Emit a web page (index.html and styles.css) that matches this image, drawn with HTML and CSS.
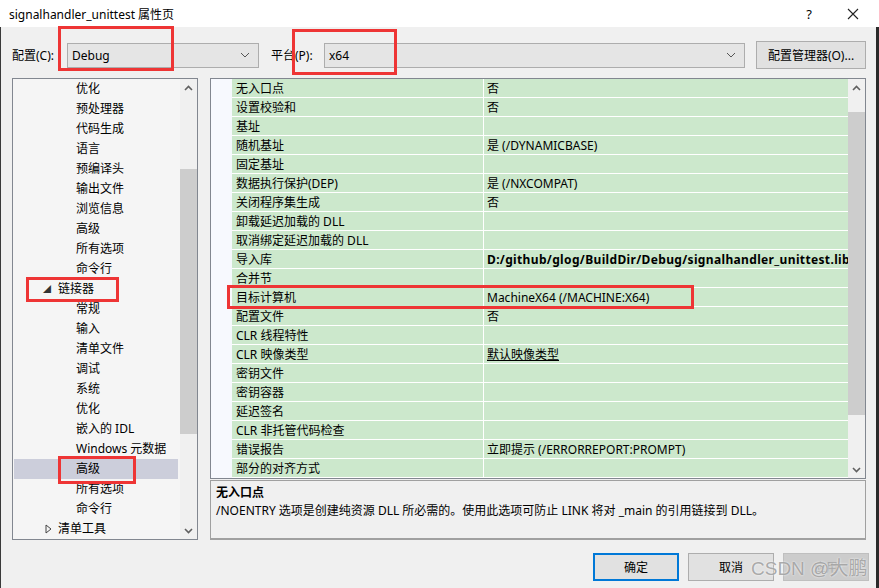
FILE: index.html
```html
<!DOCTYPE html>
<html lang="zh-CN">

<head>
    <meta charset="UTF-8">
    <title>signalhandler_unittest 属性页</title>
    <link rel="stylesheet" href="styles.css">
</head>

<body>
    <div class="window">
        <!-- Title bar -->
        <div class="titlebar">
            <span class="title">signalhandler_unittest 属性页</span>
            <span class="help">?</span>
            <svg class="close" width="12" height="12" viewBox="0 0 12 12">
                <path d="M1 1 L11 11 M11 1 L1 11" stroke="#222" stroke-width="1.1" fill="none" />
            </svg>
        </div>

        <div class="dialog">
            <!-- Config row -->
            <div class="config-row">
                <span class="label label-config">配置(C):</span>
                <div class="combo combo-config">
                    <span>Debug</span>
                    <svg class="chev" width="10" height="6" viewBox="0 0 10 6"><path d="M1 1 L5 5 L9 1" stroke="#555" fill="none" /></svg>
                </div>
                <span class="label label-platform">平台(P):</span>
                <div class="combo combo-platform">
                    <span>x64</span>
                    <svg class="chev" width="10" height="6" viewBox="0 0 10 6"><path d="M1 1 L5 5 L9 1" stroke="#555" fill="none" /></svg>
                </div>
                <div class="btn btn-manager">配置管理器(O)...</div>
            </div>

            <div class="main">
                <!-- Tree -->
                <div class="tree">
                    <div class="tree-list">
                        <div class="node lv2">优化</div>
                        <div class="node lv2">预处理器</div>
                        <div class="node lv2">代码生成</div>
                        <div class="node lv2">语言</div>
                        <div class="node lv2">预编译头</div>
                        <div class="node lv2">输出文件</div>
                        <div class="node lv2">浏览信息</div>
                        <div class="node lv2">高级</div>
                        <div class="node lv2">所有选项</div>
                        <div class="node lv2">命令行</div>
                        <div class="node lv1"><span class="tri open">◢</span>链接器</div>
                        <div class="node lv2">常规</div>
                        <div class="node lv2">输入</div>
                        <div class="node lv2">清单文件</div>
                        <div class="node lv2">调试</div>
                        <div class="node lv2">系统</div>
                        <div class="node lv2">优化</div>
                        <div class="node lv2">嵌入的 IDL</div>
                        <div class="node lv2">Windows 元数据</div>
                        <div class="node lv2 selected">高级</div>
                        <div class="node lv2">所有选项</div>
                        <div class="node lv2">命令行</div>
                        <div class="node lv1"><span class="tri closed">
                            <svg width="7" height="10" viewBox="0 0 7 10"><path d="M1 1 L6 5 L1 9 Z" stroke="#444" fill="none" /></svg>
                        </span>清单工具</div>
                    </div>
                    <div class="scrollbar tree-scroll">
                        <svg class="arrow" width="9" height="6" viewBox="0 0 9 6"><path d="M1 5 L4.5 1.5 L8 5" stroke="#606060" stroke-width="1.6" fill="none" /></svg>
                        <div class="thumb"></div>
                        <svg class="arrow down" width="9" height="6" viewBox="0 0 9 6"><path d="M1 1 L4.5 4.5 L8 1" stroke="#606060" stroke-width="1.6" fill="none" /></svg>
                    </div>
                </div>

                <div class="right">
                    <!-- Property grid -->
                    <div class="grid">
                        <div class="rows">
                            <div class="row"><div class="strip"></div><div class="name">无入口点</div><div class="value">否</div></div>
                            <div class="row"><div class="strip"></div><div class="name">设置校验和</div><div class="value">否</div></div>
                            <div class="row"><div class="strip"></div><div class="name">基址</div><div class="value"></div></div>
                            <div class="row"><div class="strip"></div><div class="name">随机基址</div><div class="value">是 (/DYNAMICBASE)</div></div>
                            <div class="row"><div class="strip"></div><div class="name">固定基址</div><div class="value"></div></div>
                            <div class="row"><div class="strip"></div><div class="name">数据执行保护(DEP)</div><div class="value">是 (/NXCOMPAT)</div></div>
                            <div class="row"><div class="strip"></div><div class="name">关闭程序集生成</div><div class="value">否</div></div>
                            <div class="row"><div class="strip"></div><div class="name">卸载延迟加载的 DLL</div><div class="value"></div></div>
                            <div class="row"><div class="strip"></div><div class="name">取消绑定延迟加载的 DLL</div><div class="value"></div></div>
                            <div class="row"><div class="strip"></div><div class="name">导入库</div><div class="value bold">D:/github/glog/BuildDir/Debug/signalhandler_unittest.lib</div></div>
                            <div class="row"><div class="strip"></div><div class="name">合并节</div><div class="value"></div></div>
                            <div class="row"><div class="strip"></div><div class="name">目标计算机</div><div class="value">MachineX64 (/MACHINE:X64)</div></div>
                            <div class="row"><div class="strip"></div><div class="name">配置文件</div><div class="value">否</div></div>
                            <div class="row"><div class="strip"></div><div class="name">CLR 线程特性</div><div class="value"></div></div>
                            <div class="row"><div class="strip"></div><div class="name">CLR 映像类型</div><div class="value"><u>默认映像类型</u></div></div>
                            <div class="row"><div class="strip"></div><div class="name">密钥文件</div><div class="value"></div></div>
                            <div class="row"><div class="strip"></div><div class="name">密钥容器</div><div class="value"></div></div>
                            <div class="row"><div class="strip"></div><div class="name">延迟签名</div><div class="value"></div></div>
                            <div class="row"><div class="strip"></div><div class="name">CLR 非托管代码检查</div><div class="value"></div></div>
                            <div class="row"><div class="strip"></div><div class="name">错误报告</div><div class="value">立即提示 (/ERRORREPORT:PROMPT)</div></div>
                            <div class="row"><div class="strip"></div><div class="name">部分的对齐方式</div><div class="value"></div></div>
                        </div>
                        <div class="scrollbar grid-scroll">
                            <svg class="arrow" width="9" height="6" viewBox="0 0 9 6"><path d="M1 5 L4.5 1.5 L8 5" stroke="#606060" stroke-width="1.6" fill="none" /></svg>
                            <div class="thumb"></div>
                            <svg class="arrow down" width="9" height="6" viewBox="0 0 9 6"><path d="M1 1 L4.5 4.5 L8 1" stroke="#606060" stroke-width="1.6" fill="none" /></svg>
                        </div>
                    </div>

                    <!-- Description -->
                    <div class="desc">
                        <div class="desc-title">无入口点</div>
                        <div class="desc-text">/NOENTRY 选项是创建纯资源 DLL 所必需的。使用此选项可防止 LINK 将对 _main 的引用链接到 DLL。</div>
                    </div>
                </div>
            </div>

            <!-- Buttons -->
            <div class="footer">
                <div class="btn btn-ok">确定</div>
                <div class="btn">取消</div>
                <div class="btn btn-disabled">应用</div>
            </div>
        </div>

        <!-- Annotation boxes -->
        <div class="mark mark-config"></div>
        <div class="mark mark-platform"></div>
        <div class="mark mark-linker"></div>
        <div class="mark mark-adv"></div>
        <div class="mark mark-target"></div>

        <div class="watermark">CSDN @大鹏</div>
    </div>
</body>

</html>
```

FILE: styles.css
```css
/* General */
* {
    margin: 0;
    padding: 0;
    box-sizing: border-box;
}

body {
    font-family: "Noto Sans", "Noto Sans CJK SC", sans-serif;
    font-size: 12px;
    color: #000;
    background-color: #f0f0f0;
    overflow: hidden;
}

.window {
    position: relative;
    width: 879px;
    height: 588px;
    background-color: #f0f0f0;
}

/* Title bar */
.titlebar {
    height: 27px;
    background-color: #fff;
    display: flex;
    align-items: center;
    padding-left: 9px;
}

.title {
    font-size: 12px;
    flex: 1;
}

.help {
    font-size: 13px;
    margin-right: 35px;
}

.close {
    margin-right: 20px;
}

/* Dialog body */
.dialog {
    height: 561px;
    border-left: 1px solid #3a3a3a;
    border-right: 3px solid #2a2a2a;
    padding: 14px 10px 0 11px;
}

.config-row {
    display: flex;
    align-items: center;
    height: 28px;
}

.label-config {
    width: 55px;
}

.label-platform {
    width: 53px;
    margin-left: 12px;
}

.combo {
    height: 25px;
    background-color: #e5e5e5;
    border: 1px solid #adadad;
    display: flex;
    align-items: center;
    justify-content: space-between;
    padding: 0 8px 0 4px;
}

.combo-config {
    width: 192px;
}

.combo-platform {
    width: 421px;
}

.btn {
    height: 28px;
    width: 86px;
    background-color: #e1e1e1;
    border: 1px solid #adadad;
    display: flex;
    align-items: center;
    justify-content: center;
}

.btn-manager {
    width: 110px;
    margin-left: 11px;
}

/* Main area */
.main {
    display: flex;
    gap: 12px;
    margin-top: 9px;
    height: 462px;
}

/* Tree */
.tree {
    width: 187px;
    height: 462px;
    border: 1px solid #828790;
    background-color: #f5f5f5;
    display: flex;
}

.tree-list {
    flex: 1;
    overflow: hidden;
}

.node {
    height: 20px;
    line-height: 20px;
    white-space: nowrap;
    margin: 0 2px 0 1px;
    display: flex;
    align-items: center;
}

.lv2 {
    padding-left: 62px;
}

.lv1 {
    padding-left: 29px;
}

.tri {
    width: 15px;
    font-size: 8px;
    color: #333;
    display: flex;
    align-items: center;
}

.tri.closed {
    padding-left: 2px;
}

.selected {
    background-color: #cccedb;
}

/* Scrollbars */
.scrollbar {
    width: 17px;
    background-color: #f0f0f0;
    display: flex;
    flex-direction: column;
    align-items: center;
}

.scrollbar .arrow {
    margin: 6px 0;
    flex-shrink: 0;
}

.scrollbar .arrow.down {
    margin-top: auto;
    margin-bottom: 5px;
}

.thumb {
    width: 17px;
    background-color: #cdcdcd;
}

.tree-scroll .thumb {
    margin-top: 72px;
    height: 265px;
}

.grid-scroll .thumb {
    margin-top: 15px;
    height: 303px;
}

/* Right side */
.right {
    width: 656px;
    display: flex;
    flex-direction: column;
    gap: 1px;
}

.grid {
    height: 401px;
    border: 1px solid #828790;
    background-color: #f7f9fe;
    display: flex;
}

.rows {
    flex: 1;
    overflow: hidden;
}

.row {
    display: flex;
    height: 19px;
}

.strip {
    width: 21px;
    background-color: #f7f9fe;
}

.name,
.value {
    background-color: #cce8cc;
    border-bottom: 1px solid #fff;
    height: 19px;
    line-height: 20px;
    white-space: nowrap;
    overflow: hidden;
}

.name {
    width: 252px;
    padding-left: 4px;
    border-right: 1px solid #fff;
}

.value {
    flex: 1;
    padding-left: 3px;
}

.bold {
    font-weight: bold;
    letter-spacing: 0.35px;
}

/* Description */
.desc {
    height: 60px;
    border: 1px solid #a0a0a0;
    border-bottom: 2px solid #a0a0a0;
    padding: 3px 5px;
    line-height: 18px;
}

.desc-title {
    font-weight: bold;
}

/* Footer */
.footer {
    display: flex;
    justify-content: flex-end;
    gap: 9px;
    margin-top: 13px;
    margin-right: -3px;
}

.btn-ok {
    border: 2px solid #0078d7;
}

.btn-disabled {
    background-color: #cccccc;
    border-color: #bfbfbf;
    color: #a8a8a8;
}

/* Red annotation boxes */
.mark {
    position: absolute;
    border: 3px solid #ee3535;
}

.mark-config {
    left: 58px;
    top: 26px;
    width: 116px;
    height: 45px;
}

.mark-platform {
    left: 292px;
    top: 29px;
    width: 105px;
    height: 46px;
}

.mark-linker {
    left: 26px;
    top: 277px;
    width: 93px;
    height: 25px;
}

.mark-adv {
    left: 58px;
    top: 456px;
    width: 78px;
    height: 28px;
}

.mark-target {
    left: 227px;
    top: 285px;
    width: 467px;
    height: 24px;
}

/* Watermark */
.watermark {
    position: absolute;
    left: 751px;
    top: 553px;
    font-family: "Liberation Sans", "Noto Sans CJK SC", sans-serif;
    font-size: 19px;
    color: rgba(150, 150, 150, 0.8);
    text-shadow: 0 0 2px #fff;
    white-space: nowrap;
}
```
